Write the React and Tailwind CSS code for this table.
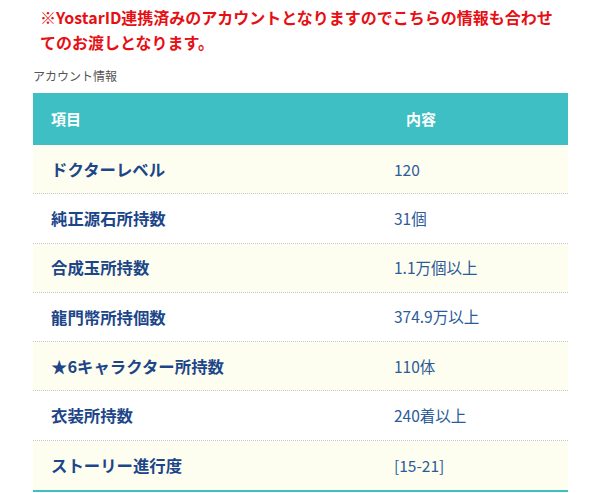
export default function App() {
  const rows = [
    ["ドクターレベル", "120"],
    ["純正源石所持数", "31個"],
    ["合成玉所持数", "1.1万個以上"],
    ["龍門幣所持個数", "374.9万以上"],
    ["★6キャラクター所持数", "110体"],
    ["衣装所持数", "240着以上"],
    ["ストーリー進行度", "[15-21]"],
  ];
  return (
    <div
      className="w-[600px] h-[493px] bg-white overflow-hidden"
      style={{ fontFamily: '"Noto Sans CJK JP", "Noto Sans", sans-serif' }}
    >
      <div className="pt-[5px] pl-[40px] text-[16px] leading-[25px] font-bold text-[#e60f14]">
        ※YostarID連携済みのアカウントとなりますのでこちらの情報も合わせ
        <br />
        てのお渡しとなります。
      </div>
      <div className="pl-[33px] mt-[12px] text-[12px] leading-[18px] text-[#555]">
        アカウント情報
      </div>
      <div className="ml-[33px] mt-[8px] w-[535px] border-b-2 border-[#3dbfc3]">
        <div className="flex h-[52px] items-center bg-[#3dbfc3] text-white font-bold text-[15px]">
          <div className="w-[360px] pl-[18px]">項目</div>
          <div className="pl-[13px]">内容</div>
        </div>
        {rows.map(([k, v], i) => (
          <div
            key={i}
            className={
              "flex h-[49.3px] items-center " +
              (i % 2 === 0 ? "bg-[#fefef0] " : "bg-white ") +
              (i < rows.length - 1 ? "border-b border-dotted border-[#c8c8c8]" : "")
            }
          >
            <div className="w-[360px] pl-[18px] text-[16.4px] font-bold text-[#1c4689]">{k}</div>
            <div className="pl-[1px] text-[15.5px] text-[#2c5b9a]">{v}</div>
          </div>
        ))}
      </div>
    </div>
  );
}
